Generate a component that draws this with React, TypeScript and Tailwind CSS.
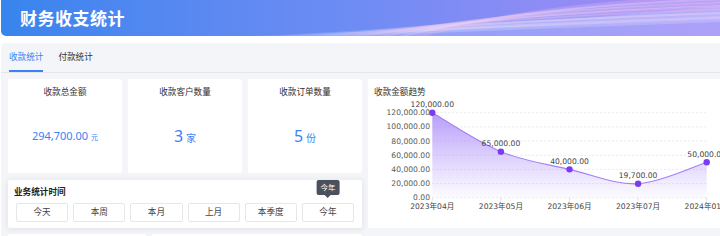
import React from 'react';

const stats = [
  { label: '收款总金额', value: '294,700.00', unit: '元', big: false },
  { label: '收款客户数量', value: '3', unit: '家', big: true },
  { label: '收款订单数量', value: '5', unit: '份', big: true },
];

const ranges = ['今天', '本周', '本月', '上月', '本季度', '今年'];

// chart geometry (svg local coords, card left = 368, svg top = 98)
const X0 = 64.3;
const STEP = 68.6;
const Y0 = 99.7;
const yOf = (v: number) => Y0 - (v * 85) / 120000;

const trend = [
  { m: '2023年04月', v: 120000, t: '120,000.00' },
  { m: '2023年05月', v: 65000, t: '65,000.00' },
  { m: '2023年06月', v: 40000, t: '40,000.00' },
  { m: '2023年07月', v: 19700, t: '19,700.00' },
  { m: '2024年01月', v: 50000, t: '50,000.00' },
];

const yTicks = [0, 20000, 40000, 60000, 80000, 100000, 120000];

function smoothPath(pts: { x: number; y: number }[]) {
  let d = `M${pts[0].x},${pts[0].y}`;
  for (let i = 0; i < pts.length - 1; i++) {
    const p0 = pts[i - 1] || pts[i];
    const p1 = pts[i];
    const p2 = pts[i + 1];
    const p3 = pts[i + 2] || p2;
    const c1x = p1.x + (p2.x - p0.x) / 6;
    const c1y = p1.y + (p2.y - p0.y) / 6;
    const c2x = p2.x - (p3.x - p1.x) / 6;
    const c2y = p2.y - (p3.y - p1.y) / 6;
    d += ` C${c1x},${c1y} ${c2x},${c2y} ${p2.x},${p2.y}`;
  }
  return d;
}

const TrendChart: React.FC = () => {
  const pts = trend.map((d, i) => ({ x: X0 + i * STEP, y: yOf(d.v) }));
  const line = smoothPath(pts);
  const last = pts[pts.length - 1];
  const area = `${line} L${last.x},${Y0} L${X0},${Y0} Z`;
  const font = "'DejaVu Sans','Noto Sans CJK SC',sans-serif";

  return (
    <svg width="352" height="130" className="block" style={{ fontFamily: font }}>
      <defs>
        <linearGradient id="areaFill" x1="0" y1="14" x2="0" y2="100" gradientUnits="userSpaceOnUse">
          <stop offset="0" stopColor="#9f7bf7" stopOpacity="0.75" />
          <stop offset="1" stopColor="#a78bfa" stopOpacity="0.03" />
        </linearGradient>
      </defs>

      {yTicks.map((v) => (
        <g key={v}>
          <line x1={X0} x2={last.x} y1={yOf(v)} y2={yOf(v)} stroke="#e3e3e8" strokeDasharray="2 2" strokeWidth="0.8" />
          <text x={62} y={yOf(v)} textAnchor="end" dominantBaseline="central" fontSize="7.6" fill="#585858">
            {v.toLocaleString('en-US', { minimumFractionDigits: 2 })}
          </text>
        </g>
      ))}

      {pts.map((p, i) => (
        <line key={i} x1={p.x} x2={p.x} y1={Y0} y2={Y0 + 3} stroke="#d6d6dc" strokeWidth="0.8" />
      ))}

      <path d={area} fill="url(#areaFill)" />
      <path d={line} fill="none" stroke="#a47ff8" strokeWidth="1.1" />

      {pts.map((p, i) => (
        <g key={i}>
          <circle cx={p.x} cy={p.y} r="3.2" fill="#7a3cf0" />
          <text x={p.x} y={p.y - 5.5} textAnchor="middle" fontSize="7.6" fill="#444">
            {trend[i].t}
          </text>
          <text x={p.x} y={108.8} textAnchor="middle" dominantBaseline="central" fontSize="7.6" fill="#444">
            {trend[i].m}
          </text>
        </g>
      ))}
    </svg>
  );
};

// soft streaks on the right side of the banner
const streaks = [
  { c: '#c9d8ff', o: 0.35, w: 4 },
  { c: '#f5c8f0', o: 0.4, w: 3 },
  { c: '#dbe4ff', o: 0.3, w: 5 },
  { c: '#f9d2f2', o: 0.45, w: 2 },
  { c: '#c7d6ff', o: 0.3, w: 4 },
  { c: '#f3b9ec', o: 0.35, w: 3 },
  { c: '#e6ecff', o: 0.35, w: 2 },
  { c: '#f6c4ee', o: 0.4, w: 4 },
  { c: '#d5defe', o: 0.3, w: 3 },
  { c: '#fbd7f4', o: 0.4, w: 2 },
  { c: '#e9b8f0', o: 0.3, w: 4 },
];

const HeaderWaves: React.FC = () => (
  <svg className="absolute inset-0 w-full h-full" viewBox="0 0 720 36" preserveAspectRatio="none">
    <defs>
      <linearGradient id="fade" x1="0" x2="1" y1="0" y2="0">
        <stop offset="0.3" stopColor="#fff" stopOpacity="0" />
        <stop offset="0.6" stopColor="#fff" stopOpacity="1" />
      </linearGradient>
      <mask id="fadeMask">
        <rect x="0" y="0" width="720" height="36" fill="url(#fade)" />
      </mask>
    </defs>
    <g mask="url(#fadeMask)">
      <path d="M240 36 C400 32 560 22 720 6 L720 36 Z" fill="#b9c8ff" fillOpacity="0.35" />
      {streaks.map((s, i) => (
        <path
          key={i}
          d={`M${250 + i * 16} 38 C${390 + i * 12} ${33 - i * 2.2} ${530 + i * 8} ${27 - i * 2.6} 720 ${20 - i * 2.3}`}
          fill="none"
          stroke={s.c}
          strokeOpacity={s.o}
          strokeWidth={s.w}
        />
      ))}
    </g>
  </svg>
);

export default function App() {
  return (
    <div className="w-[720px] h-[236px] overflow-hidden bg-white font-['Noto_Sans','Noto_Sans_CJK_SC',sans-serif]">
      {/* Title banner */}
      <header className="relative h-[36px] ml-[1px] rounded-bl-[5px] overflow-hidden bg-linear-to-r from-[#3884ee] via-[#6f8cf4] to-[#a88af6] flex items-center pl-[19px]">
        <HeaderWaves />
        <h1 className="relative text-white text-[17px] font-bold leading-none tracking-[0.5px]">财务收支统计</h1>
      </header>

      <div className="mt-[7px] ml-[1px] rounded-tl-[5px] bg-[#f4f5f8] h-[200px]">
        {/* Tabs */}
        <div className="h-[30px] border-b border-[#e4e6ec] flex gap-[15px] pl-[8px]">
          <div className="relative h-full flex items-center text-[8.6px] text-[#3b82f6]">
            收款统计
            <span className="absolute left-0 right-0 bottom-0 h-[2px] bg-[#3b82f6]" />
          </div>
          <div className="h-full flex items-center text-[8.6px] text-[#333]">付款统计</div>
        </div>

        <div className="pt-[6px] pl-[7px] flex gap-[6px]">
          <div className="w-[354px] flex flex-col gap-[7px]">
            <div className="flex gap-[6px] h-[94px]">
              {stats.map((s) => (
                <div key={s.label} className="w-[114px] bg-white rounded-[2px] flex flex-col items-center pt-[7px]">
                  <div className="text-[8.6px] leading-[12px] text-[#333]">{s.label}</div>
                  <div className="mt-[28px] h-[20px] flex items-baseline justify-center gap-[3px] text-[#3b82f6]">
                    {s.big ? (
                      <>
                        <span className="text-[16px] leading-[20px]">{s.value}</span>
                        <span className="text-[10px]">{s.unit}</span>
                      </>
                    ) : (
                      <>
                        <span className="text-[11px] leading-[20px]">{s.value}</span>
                        <span className="text-[7px]">{s.unit}</span>
                      </>
                    )}
                  </div>
                </div>
              ))}
            </div>

            {/* Time range picker */}
            <div className="h-[48px] bg-white rounded-[2px] shadow-[0_1px_6px_rgba(30,40,90,0.1)] pt-[6px]">
              <div className="pl-[6px] text-[8.6px] leading-[12px] font-bold text-[#222]">业务统计时间</div>
              <div className="mt-[5px] px-[8px] grid grid-cols-6 gap-[5px]">
                {ranges.map((r, i) => (
                  <button
                    key={r}
                    className="relative h-[19px] border border-[#e6e7eb] rounded-[2px] bg-white text-[8.6px] text-[#444] flex items-center justify-center"
                  >
                    {r}
                    {i === ranges.length - 1 && (
                      <span className="absolute left-1/2 -translate-x-1/2 bottom-[26px] h-[15px] px-[4px] rounded-[2px] bg-[#4b505e] text-white text-[7.4px] leading-[15px] whitespace-nowrap">
                        今年
                        <span className="absolute left-1/2 -translate-x-1/2 top-full w-0 h-0 border-x-[3px] border-x-transparent border-t-[3px] border-t-[#4b505e]" />
                      </span>
                    )}
                  </button>
                ))}
              </div>
            </div>

            <div className="flex gap-[6px] h-[20px] -mt-[1px]">
              <div className="w-[138px] bg-white rounded-[2px]" />
              <div className="flex-1 bg-white rounded-[2px]" />
            </div>
          </div>

          {/* Trend chart */}
          <div className="flex-1 h-[149px] bg-white rounded-l-[2px] flex flex-col overflow-hidden">
            <div className="pl-[6px] pt-[7px] text-[8.6px] leading-[12px] text-[#333]">收款金额趋势</div>
            <TrendChart />
          </div>
        </div>
      </div>
    </div>
  );
}
